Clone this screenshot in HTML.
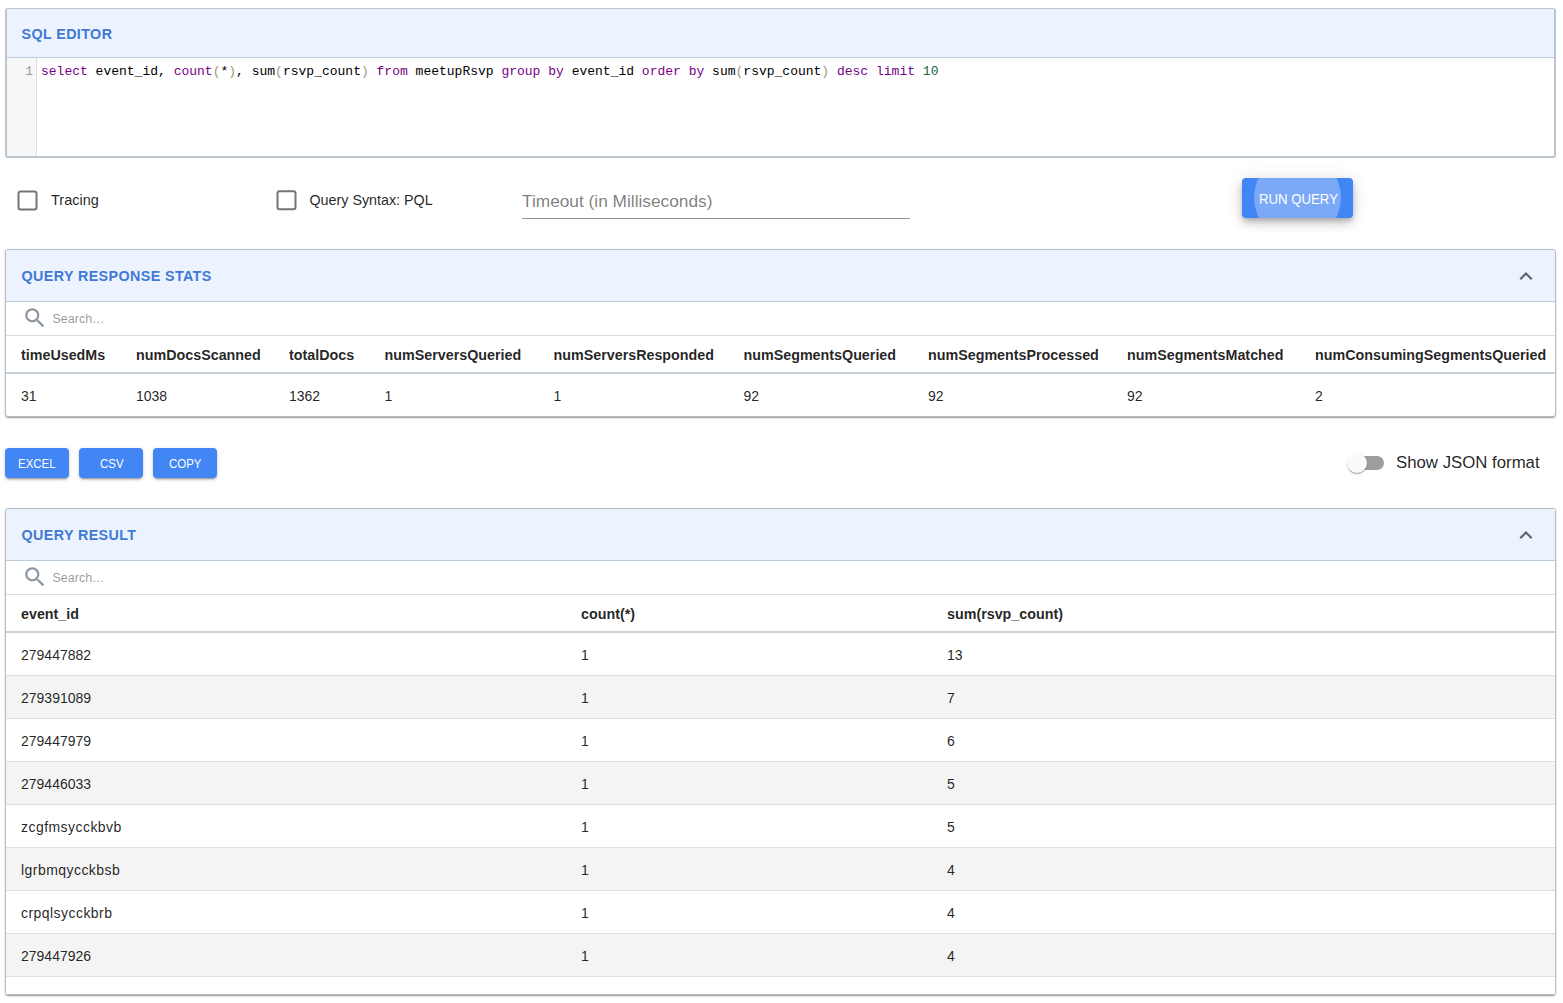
<!DOCTYPE html>
<html><head><meta charset="utf-8">
<style>
*{box-sizing:border-box;margin:0;padding:0}
html,body{width:1563px;height:1003px;overflow:hidden;background:#fff;font-family:"Liberation Sans",sans-serif;color:rgba(0,0,0,0.87)}
.a{position:absolute;white-space:nowrap;line-height:1}
</style></head><body>
<div style="position:absolute;left:5px;top:8px;width:1551px;height:150px;border:2px solid #bac5cf;border-top-width:1px;border-radius:3px;background:#fff;"></div>
<div style="position:absolute;left:7px;top:9px;width:1547px;height:49px;background:#ecf3fe;border-bottom:1px solid #bdccd9;border-radius:2px 2px 0 0"></div>
<div class="a" style="left:21.5px;top:26.90px;font-size:14.3px;color:#4179d6;font-weight:bold;letter-spacing:0.4px;">SQL EDITOR</div>
<div style="position:absolute;left:7px;top:58px;width:30px;height:98px;background:#f7f7f7;border-right:1px solid #ddd;border-bottom-left-radius:2px"></div>
<div class="a" style="right:1530px;top:65.34px;font-size:13px;color:#999;font-weight:normal;letter-spacing:0px;font-family:'Liberation Mono',monospace;">1</div>
<div class="a" style="left:41px;top:65.04px;font-size:13px;color:#000;font-weight:normal;letter-spacing:0px;font-family:'Liberation Mono',monospace;"><span style="color:#770088">select</span> event_id, <span style="color:#770088">count</span><span style="color:#999977">(</span>*<span style="color:#999977">)</span>, sum<span style="color:#999977">(</span>rsvp_count<span style="color:#999977">)</span> <span style="color:#770088">from</span> meetupRsvp <span style="color:#770088">group</span> <span style="color:#770088">by</span> event_id <span style="color:#770088">order</span> <span style="color:#770088">by</span> sum<span style="color:#999977">(</span>rsvp_count<span style="color:#999977">)</span> <span style="color:#770088">desc</span> <span style="color:#770088">limit</span> <span style="color:#116644">10</span></div>
<div class="a" style="left:51px;top:192.73px;font-size:14.5px;color:rgba(0,0,0,0.87);font-weight:normal;letter-spacing:0px;">Tracing</div>
<div class="a" style="left:309.5px;top:192.90px;font-size:14.3px;color:rgba(0,0,0,0.87);font-weight:normal;letter-spacing:0px;">Query Syntax: PQL</div>
<div class="a" style="left:522px;top:193.36px;font-size:17.3px;color:rgba(0,0,0,0.52);font-weight:normal;letter-spacing:0px;">Timeout (in Milliseconds)</div>
<div style="position:absolute;left:522px;top:218px;width:388px;height:1px;background:rgba(0,0,0,0.42)"></div>
<div style="position:absolute;left:1242px;top:178px;width:111px;height:40px;background:#4285f4;border-radius:4px;overflow:hidden;box-shadow:0 3px 5px -1px rgba(0,0,0,.2),0 6px 10px 0 rgba(0,0,0,.14),0 1px 18px 0 rgba(0,0,0,.12)"><div style="position:absolute;left:12px;top:-24px;width:87px;height:87px;border-radius:50%;background:rgba(255,255,255,0.3)"></div></div>
<div class="a" style="left:1258.5px;top:192.18px;font-size:14.2px;color:#fff;font-weight:normal;letter-spacing:0px;transform:scaleX(0.93);transform-origin:0 0;">RUN QUERY</div>
<div style="position:absolute;left:5px;top:249px;width:1551px;height:168px;border:1px solid #b4bcc4;border-radius:3px;background:#fff;box-shadow:0 2px 1px -1px rgba(0,0,0,.2),0 1px 1px 0 rgba(0,0,0,.14),0 1px 3px 0 rgba(0,0,0,.12);"></div>
<div style="position:absolute;left:6px;top:250px;width:1549px;height:52px;background:#ecf3fe;border-bottom:1px solid #bdccd9;border-radius:2px 2px 0 0"></div>
<div class="a" style="left:21.5px;top:268.90px;font-size:14.3px;color:#4179d6;font-weight:bold;letter-spacing:0.4px;">QUERY RESPONSE STATS</div>
<svg style="position:absolute;left:22px;top:305px" width="26" height="26" viewBox="0 0 24 24"><path fill="#8a96a2" d="M15.5 14h-.79l-.28-.27C15.41 12.59 16 11.11 16 9.5 16 5.91 13.09 3 9.5 3S3 5.91 3 9.5 5.91 16 9.5 16c1.61 0 3.09-.59 4.23-1.57l.27.28v.79l5 4.99L20.49 19l-4.99-5zm-6 0C7.01 14 5 11.99 5 9.5S7.01 5 9.5 5 14 7.01 14 9.5 11.99 14 9.5 14z"/></svg>
<div class="a" style="left:52.5px;top:312.92px;font-size:12.5px;color:rgba(0,0,0,0.42);font-weight:normal;letter-spacing:0px;">Search…</div>
<div style="position:absolute;left:6px;top:335px;width:1549px;height:1px;background:#d5dde5"></div>
<div class="a" style="left:21px;top:347.90px;font-size:14.3px;color:rgba(0,0,0,0.87);font-weight:bold;letter-spacing:0px;">timeUsedMs</div>
<div class="a" style="left:21px;top:389.15px;font-size:14px;color:rgba(0,0,0,0.87);font-weight:normal;letter-spacing:0px;">31</div>
<div class="a" style="left:136px;top:347.90px;font-size:14.3px;color:rgba(0,0,0,0.87);font-weight:bold;letter-spacing:0px;">numDocsScanned</div>
<div class="a" style="left:136px;top:389.15px;font-size:14px;color:rgba(0,0,0,0.87);font-weight:normal;letter-spacing:0px;">1038</div>
<div class="a" style="left:289px;top:347.90px;font-size:14.3px;color:rgba(0,0,0,0.87);font-weight:bold;letter-spacing:0px;">totalDocs</div>
<div class="a" style="left:289px;top:389.15px;font-size:14px;color:rgba(0,0,0,0.87);font-weight:normal;letter-spacing:0px;">1362</div>
<div class="a" style="left:384.5px;top:347.90px;font-size:14.3px;color:rgba(0,0,0,0.87);font-weight:bold;letter-spacing:0px;">numServersQueried</div>
<div class="a" style="left:384.5px;top:389.15px;font-size:14px;color:rgba(0,0,0,0.87);font-weight:normal;letter-spacing:0px;">1</div>
<div class="a" style="left:553.5px;top:347.90px;font-size:14.3px;color:rgba(0,0,0,0.87);font-weight:bold;letter-spacing:0px;">numServersResponded</div>
<div class="a" style="left:553.5px;top:389.15px;font-size:14px;color:rgba(0,0,0,0.87);font-weight:normal;letter-spacing:0px;">1</div>
<div class="a" style="left:743.5px;top:347.90px;font-size:14.3px;color:rgba(0,0,0,0.87);font-weight:bold;letter-spacing:0px;">numSegmentsQueried</div>
<div class="a" style="left:743.5px;top:389.15px;font-size:14px;color:rgba(0,0,0,0.87);font-weight:normal;letter-spacing:0px;">92</div>
<div class="a" style="left:928px;top:347.90px;font-size:14.3px;color:rgba(0,0,0,0.87);font-weight:bold;letter-spacing:0px;">numSegmentsProcessed</div>
<div class="a" style="left:928px;top:389.15px;font-size:14px;color:rgba(0,0,0,0.87);font-weight:normal;letter-spacing:0px;">92</div>
<div class="a" style="left:1127px;top:347.90px;font-size:14.3px;color:rgba(0,0,0,0.87);font-weight:bold;letter-spacing:0px;">numSegmentsMatched</div>
<div class="a" style="left:1127px;top:389.15px;font-size:14px;color:rgba(0,0,0,0.87);font-weight:normal;letter-spacing:0px;">92</div>
<div class="a" style="left:1315px;top:347.90px;font-size:14.3px;color:rgba(0,0,0,0.87);font-weight:bold;letter-spacing:0px;">numConsumingSegmentsQueried</div>
<div class="a" style="left:1315px;top:389.15px;font-size:14px;color:rgba(0,0,0,0.87);font-weight:normal;letter-spacing:0px;">2</div>
<div style="position:absolute;left:6px;top:372px;width:1549px;height:2px;background:#c8d3dc"></div>
<div style="position:absolute;left:5px;top:448px;width:64px;height:30px;background:#4285f4;border-radius:4px;box-shadow:0 3px 1px -2px rgba(0,0,0,.2),0 2px 2px 0 rgba(0,0,0,.14),0 1px 5px 0 rgba(0,0,0,.12)"></div>
<div class="a" style="left:18.4px;top:456.57px;font-size:13.5px;color:#fff;font-weight:normal;letter-spacing:0px;transform:scaleX(0.85);transform-origin:0 0;">EXCEL</div>
<div style="position:absolute;left:79px;top:448px;width:64px;height:30px;background:#4285f4;border-radius:4px;box-shadow:0 3px 1px -2px rgba(0,0,0,.2),0 2px 2px 0 rgba(0,0,0,.14),0 1px 5px 0 rgba(0,0,0,.12)"></div>
<div class="a" style="left:99.8px;top:456.57px;font-size:13.5px;color:#fff;font-weight:normal;letter-spacing:0px;transform:scaleX(0.85);transform-origin:0 0;">CSV</div>
<div style="position:absolute;left:153px;top:448px;width:64px;height:30px;background:#4285f4;border-radius:4px;box-shadow:0 3px 1px -2px rgba(0,0,0,.2),0 2px 2px 0 rgba(0,0,0,.14),0 1px 5px 0 rgba(0,0,0,.12)"></div>
<div class="a" style="left:169px;top:456.57px;font-size:13.5px;color:#fff;font-weight:normal;letter-spacing:0px;transform:scaleX(0.85);transform-origin:0 0;">COPY</div>
<div style="position:absolute;left:1350px;top:456px;width:34px;height:14px;background:#9e9e9e;border-radius:7px"></div>
<div style="position:absolute;left:1347px;top:453px;width:20px;height:20px;border-radius:50%;background:#fafafa;box-shadow:0 2px 1px -1px rgba(0,0,0,.2),0 1px 1px 0 rgba(0,0,0,.14),0 1px 3px 0 rgba(0,0,0,.12)"></div>
<div class="a" style="left:1396px;top:455.28px;font-size:16.8px;color:rgba(0,0,0,0.87);font-weight:normal;letter-spacing:0px;">Show JSON format</div>
<div style="position:absolute;left:5px;top:508px;width:1551px;height:487px;border:1px solid #b4bcc4;border-radius:3px;background:#fff;box-shadow:0 2px 1px -1px rgba(0,0,0,.2),0 1px 1px 0 rgba(0,0,0,.14),0 1px 3px 0 rgba(0,0,0,.12);"></div>
<div style="position:absolute;left:6px;top:509px;width:1549px;height:52px;background:#ecf3fe;border-bottom:1px solid #bdccd9;border-radius:2px 2px 0 0"></div>
<div class="a" style="left:21.5px;top:527.90px;font-size:14.3px;color:#4179d6;font-weight:bold;letter-spacing:0.4px;">QUERY RESULT</div>
<svg style="position:absolute;left:22px;top:564px" width="26" height="26" viewBox="0 0 24 24"><path fill="#8a96a2" d="M15.5 14h-.79l-.28-.27C15.41 12.59 16 11.11 16 9.5 16 5.91 13.09 3 9.5 3S3 5.91 3 9.5 5.91 16 9.5 16c1.61 0 3.09-.59 4.23-1.57l.27.28v.79l5 4.99L20.49 19l-4.99-5zm-6 0C7.01 14 5 11.99 5 9.5S7.01 5 9.5 5 14 7.01 14 9.5 11.99 14 9.5 14z"/></svg>
<div class="a" style="left:52.5px;top:571.92px;font-size:12.5px;color:rgba(0,0,0,0.42);font-weight:normal;letter-spacing:0px;">Search…</div>
<div style="position:absolute;left:6px;top:594px;width:1549px;height:1px;background:#d5dde5"></div>
<div class="a" style="left:21px;top:606.90px;font-size:14.3px;color:rgba(0,0,0,0.87);font-weight:bold;letter-spacing:0px;">event_id</div>
<div class="a" style="left:581px;top:606.90px;font-size:14.3px;color:rgba(0,0,0,0.87);font-weight:bold;letter-spacing:0px;">count(*)</div>
<div class="a" style="left:947px;top:606.90px;font-size:14.3px;color:rgba(0,0,0,0.87);font-weight:bold;letter-spacing:0px;">sum(rsvp_count)</div>
<div style="position:absolute;left:6px;top:631px;width:1549px;height:2px;background:#c8d3dc"></div>
<div style="position:absolute;left:6px;top:633px;width:1549px;height:362px;overflow:hidden">
<div style="position:absolute;left:0;top:0px;width:1549px;height:43px;background:#fff;border-bottom:1px solid #e0e0e0"></div>
<div class="a" style="left:15px;top:15.45px;font-size:14px;letter-spacing:0">279447882</div>
<div class="a" style="left:575px;top:15.45px;font-size:14px;letter-spacing:0">1</div>
<div class="a" style="left:941px;top:15.45px;font-size:14px;letter-spacing:0">13</div>
<div style="position:absolute;left:0;top:43px;width:1549px;height:43px;background:#f4f4f4;border-bottom:1px solid #e0e0e0"></div>
<div class="a" style="left:15px;top:58.45px;font-size:14px;letter-spacing:0">279391089</div>
<div class="a" style="left:575px;top:58.45px;font-size:14px;letter-spacing:0">1</div>
<div class="a" style="left:941px;top:58.45px;font-size:14px;letter-spacing:0">7</div>
<div style="position:absolute;left:0;top:86px;width:1549px;height:43px;background:#fff;border-bottom:1px solid #e0e0e0"></div>
<div class="a" style="left:15px;top:101.45px;font-size:14px;letter-spacing:0">279447979</div>
<div class="a" style="left:575px;top:101.45px;font-size:14px;letter-spacing:0">1</div>
<div class="a" style="left:941px;top:101.45px;font-size:14px;letter-spacing:0">6</div>
<div style="position:absolute;left:0;top:129px;width:1549px;height:43px;background:#f4f4f4;border-bottom:1px solid #e0e0e0"></div>
<div class="a" style="left:15px;top:144.45px;font-size:14px;letter-spacing:0">279446033</div>
<div class="a" style="left:575px;top:144.45px;font-size:14px;letter-spacing:0">1</div>
<div class="a" style="left:941px;top:144.45px;font-size:14px;letter-spacing:0">5</div>
<div style="position:absolute;left:0;top:172px;width:1549px;height:43px;background:#fff;border-bottom:1px solid #e0e0e0"></div>
<div class="a" style="left:15px;top:187.45px;font-size:14px;letter-spacing:0.45px">zcgfmsycckbvb</div>
<div class="a" style="left:575px;top:187.45px;font-size:14px;letter-spacing:0">1</div>
<div class="a" style="left:941px;top:187.45px;font-size:14px;letter-spacing:0">5</div>
<div style="position:absolute;left:0;top:215px;width:1549px;height:43px;background:#f4f4f4;border-bottom:1px solid #e0e0e0"></div>
<div class="a" style="left:15px;top:230.45px;font-size:14px;letter-spacing:0.45px">lgrbmqycckbsb</div>
<div class="a" style="left:575px;top:230.45px;font-size:14px;letter-spacing:0">1</div>
<div class="a" style="left:941px;top:230.45px;font-size:14px;letter-spacing:0">4</div>
<div style="position:absolute;left:0;top:258px;width:1549px;height:43px;background:#fff;border-bottom:1px solid #e0e0e0"></div>
<div class="a" style="left:15px;top:273.45px;font-size:14px;letter-spacing:0.45px">crpqlsycckbrb</div>
<div class="a" style="left:575px;top:273.45px;font-size:14px;letter-spacing:0">1</div>
<div class="a" style="left:941px;top:273.45px;font-size:14px;letter-spacing:0">4</div>
<div style="position:absolute;left:0;top:301px;width:1549px;height:43px;background:#f4f4f4;border-bottom:1px solid #e0e0e0"></div>
<div class="a" style="left:15px;top:316.45px;font-size:14px;letter-spacing:0">279447926</div>
<div class="a" style="left:575px;top:316.45px;font-size:14px;letter-spacing:0">1</div>
<div class="a" style="left:941px;top:316.45px;font-size:14px;letter-spacing:0">4</div>
<div style="position:absolute;left:0;top:344px;width:1549px;height:17px;background:#fff;"></div>
<div class="a" style="left:15px;top:360.05px;font-size:14px;letter-spacing:0">279447940</div>
<div class="a" style="left:575px;top:360.05px;font-size:14px;letter-spacing:0">1</div>
<div class="a" style="left:941px;top:360.05px;font-size:14px;letter-spacing:0">4</div>
</div>
<svg style="position:absolute;left:0;top:0" width="1563" height="1003" viewBox="0 0 1563 1003"><rect x="18.5" y="191.4" width="18" height="18" rx="2" fill="none" stroke="#757575" stroke-width="2"/><rect x="277.5" y="191.2" width="18" height="18" rx="2" fill="none" stroke="#757575" stroke-width="2"/><g transform="translate(1513,263.3) scale(1.0833)"><path fill="#606368" d="M12 8l-6 6 1.41 1.41L12 10.83l4.59 4.58L18 14z"/></g><g transform="translate(1513,522.3) scale(1.0833)"><path fill="#606368" d="M12 8l-6 6 1.41 1.41L12 10.83l4.59 4.58L18 14z"/></g></svg>
</body></html>
